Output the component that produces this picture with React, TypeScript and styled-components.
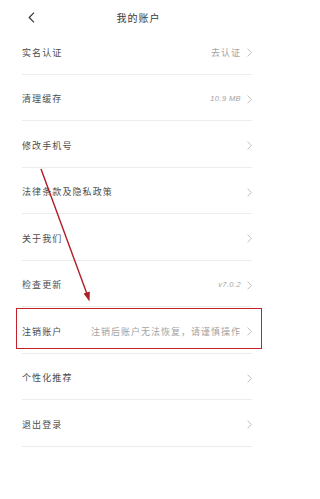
import React from "react";
import styled, { createGlobalStyle } from "styled-components";

const Global = createGlobalStyle`
  html, body { margin: 0; padding: 0; background: #ffffff; }
  body { font-family: "Noto Sans CJK SC", "Noto Sans", sans-serif; }
  * { box-sizing: border-box; }
`;

const Page = styled.div`
  position: relative;
  width: 277px;
  height: 499px;
  background: #ffffff;
  overflow: hidden;
`;

const Header = styled.header`
  position: relative;
  height: 28px;
  padding-top: 7px;
  display: flex;
  align-items: center;
  justify-content: center;
`;

const BackButton = styled.button`
  position: absolute;
  left: 26px;
  top: 11px;
  width: 10px;
  height: 13px;
  padding: 0;
  border: 0;
  background: none;
  display: flex;
  align-items: center;
  justify-content: center;
`;

const Title = styled.h1`
  margin: 0;
  font-size: 10px;
  font-weight: 400;
  letter-spacing: 1px;
  color: #3a3a3a;
  line-height: 14px;
`;

const List = styled.ul`
  list-style: none;
  margin: 0;
  padding: 0 25px 0 22px;
`;

const Row = styled.li<{ $marked?: boolean }>`
  position: relative;
  height: 46.5px;
  padding-top: 4px;
  display: flex;
  align-items: center;
  justify-content: space-between;
  border-bottom: 1px solid #ececec;
  ${(p) =>
    p.$marked &&
    `
    &::after {
      content: "";
      position: absolute;
      left: -6px;
      right: -10px;
      top: 1px;
      bottom: 4px;
      border: 1.5px solid #c4222b;
      pointer-events: none;
    }
  `}
`;

const Label = styled.span`
  font-size: 9px;
  letter-spacing: 1.1px;
  color: #4d4d4d;
  line-height: 12px;
`;

const Right = styled.span`
  display: flex;
  align-items: center;
  gap: 6px;
`;

const Value = styled.span<{ $latin?: boolean }>`
  font-size: ${(p) => (p.$latin ? "7.5px" : "9px")};
  font-style: ${(p) => (p.$latin ? "italic" : "normal")};
  font-family: ${(p) =>
    p.$latin ? `"Liberation Sans", "Noto Sans", sans-serif` : "inherit"};
  letter-spacing: ${(p) => (p.$latin ? "0.4px" : "1px")};
  color: #a3a3a3;
  line-height: 12px;
`;

const Overlay = styled.svg`
  position: absolute;
  left: 0;
  top: 0;
  pointer-events: none;
`;

const Chevron = () => (
  <svg width="5" height="9" viewBox="0 0 5 9">
    <polyline
      points="0.6,0.6 4.3,4.5 0.6,8.4"
      fill="none"
      stroke="#b0b0b0"
      strokeWidth="0.8"
    />
  </svg>
);

type Item = { label: string; value?: string; latin?: boolean; marked?: boolean };

const items: Item[] = [
  { label: "实名认证", value: "去认证" },
  { label: "清理缓存", value: "10.9 MB", latin: true },
  { label: "修改手机号" },
  { label: "法律条款及隐私政策" },
  { label: "关于我们" },
  { label: "检查更新", value: "v7.0.2", latin: true },
  { label: "注销账户", value: "注销后账户无法恢复，请谨慎操作", marked: true },
  { label: "个性化推荐" },
  { label: "退出登录" },
];

export default function App() {
  return (
    <>
      <Global />
      <Page>
        <Header>
          <BackButton aria-label="返回">
            <svg width="7" height="11" viewBox="0 0 7 11">
              <polyline
                points="6,0.7 1.2,5.5 6,10.3"
                fill="none"
                stroke="#333333"
                strokeWidth="1.2"
              />
            </svg>
          </BackButton>
          <Title>我的账户</Title>
        </Header>
        <List>
          {items.map((it) => (
            <Row key={it.label} $marked={it.marked}>
              <Label>{it.label}</Label>
              <Right>
                {it.value && <Value $latin={it.latin}>{it.value}</Value>}
                <Chevron />
              </Right>
            </Row>
          ))}
        </List>
        <Overlay width="277" height="499" viewBox="0 0 277 499">
          <line x1="41" y1="169" x2="87" y2="294" stroke="#b01d26" strokeWidth="1.4" />
          <polygon points="89.5,301.5 83.6,293.6 89.8,291.4" fill="#b01d26" />
        </Overlay>
      </Page>
    </>
  );
}
